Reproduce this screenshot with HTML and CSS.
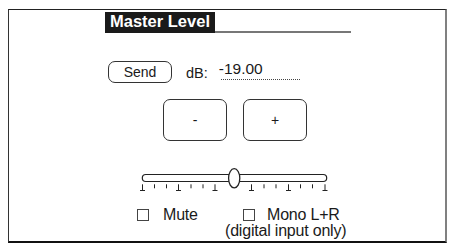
FILE: index.html
```html
<!DOCTYPE html>
<html>
<head>
<meta charset="utf-8">
<link rel="stylesheet" href="styles.css">
</head>
<body>
<div class="frame">
  <div class="header">
    <div class="label">Master Level</div>
    <div class="rule"></div>
  </div>
  <div class="send-row">
    <div class="btn send">Send</div>
    <div class="db">dB:</div>
    <div class="value">-19.00</div>
  </div>
  <div class="step-row">
    <div class="btn step">-</div>
    <div class="btn step">+</div>
  </div>
  <svg class="slider" width="194" height="28" viewBox="0 0 194 28">
    <rect x="4.3" y="8.5" width="184.4" height="7" rx="3.5" fill="#fff" stroke="#222" stroke-width="1.2"/>
    <g stroke="#222" stroke-width="1">
      <line x1="4.5" y1="18.3" x2="4.5" y2="25"/><line x1="2" y1="24.5" x2="7" y2="24.5"/>
      <line x1="16.5" y1="18.3" x2="16.5" y2="22.3"/>
      <line x1="28.5" y1="18.3" x2="28.5" y2="22.3"/>
      <line x1="40.5" y1="18.3" x2="40.5" y2="25"/><line x1="38" y1="24.5" x2="43" y2="24.5"/>
      <line x1="53" y1="18.3" x2="53" y2="22.3"/>
      <line x1="65" y1="18.3" x2="65" y2="22.3"/>
      <line x1="77" y1="18.3" x2="77" y2="25"/><line x1="74.5" y1="24.5" x2="79.5" y2="24.5"/>
      <line x1="113.5" y1="18.3" x2="113.5" y2="25"/><line x1="111" y1="24.5" x2="116" y2="24.5"/>
      <line x1="126" y1="18.3" x2="126" y2="22.3"/>
      <line x1="138" y1="18.3" x2="138" y2="22.3"/>
      <line x1="150.5" y1="18.3" x2="150.5" y2="25"/><line x1="148" y1="24.5" x2="153" y2="24.5"/>
      <line x1="162.5" y1="18.3" x2="162.5" y2="22.3"/>
      <line x1="174.5" y1="18.3" x2="174.5" y2="22.3"/>
      <line x1="187" y1="18.3" x2="187" y2="25"/><line x1="184.5" y1="24.5" x2="189.5" y2="24.5"/>
    </g>
    <ellipse cx="96.2" cy="12.3" rx="5.6" ry="9.6" fill="#fff" stroke="#222" stroke-width="1.3"/>
  </svg>
  <div class="check-row">
    <div class="check first">
      <span class="box"></span><span class="txt">Mute</span>
    </div>
    <div class="check-col">
      <div class="check second">
        <span class="box"></span><span class="txt">Mono L+R</span>
      </div>
      <div class="sub">(digital input only)</div>
    </div>
  </div>
</div>
</body>
</html>
```

FILE: styles.css
```css
html, body {
  margin: 0;
  padding: 0;
  background: #fff;
}
body {
  font-family: "Liberation Sans", Arial, sans-serif;
  color: #1a1a1a;
}
.frame {
  box-sizing: border-box;
  margin: 9px 0 0 8px;
  width: 439px;
  height: 234px;
  border-top: 1px solid #222;
  border-left: 1px solid #333;
  border-right: 2px solid #808080;
  border-bottom: 2px solid #111;
}
.header {
  display: flex;
  margin: 2px 0 0 96px;
  width: 246px;
}
.label {
  background: #1a1a1a;
  color: #fff;
  font-weight: bold;
  font-size: 16.5px;
  line-height: 19px;
  height: 19px;
  padding: 0 5px 2px 5px;
}
.rule {
  flex: 1;
  border-bottom: 2px solid #777;
}
.send-row {
  display: flex;
  align-items: flex-start;
  margin: 28px 0 0 99px;
}
.btn {
  box-sizing: border-box;
  border: 1px solid #333;
  border-radius: 7px;
  display: flex;
  align-items: center;
  justify-content: center;
}
.send {
  width: 64px;
  height: 22px;
  font-size: 14px;
}
.db {
  font-size: 14.5px;
  line-height: 16px;
  margin: 4px 0 0 14px;
}
.value {
  font-size: 15.5px;
  line-height: 16px;
  height: 18px;
  width: 79px;
  margin-left: 13px;
  text-indent: -2px;
  border-bottom: 1px dotted #444;
}
.step-row {
  display: flex;
  gap: 16px;
  margin: 16px 0 0 154px;
}
.step {
  width: 64px;
  height: 42px;
  font-size: 14px;
}
.slider {
  display: block;
  margin: 25px 0 0 129px;
}
.check-row {
  display: flex;
  align-items: flex-start;
  margin: 13px 0 0 128px;
  font-size: 16px;
  line-height: 16px;
  letter-spacing: -0.2px;
}
.check {
  display: flex;
  align-items: flex-start;
}
.first {
  width: 106px;
}
.box {
  box-sizing: border-box;
  width: 12px;
  height: 12px;
  border: 1px solid #444;
  margin-top: 2px;
}
.first .txt {
  margin-left: 14px;
}
.second .txt {
  margin-left: 12px;
}
.sub {
  margin-left: -18px;
}
```
